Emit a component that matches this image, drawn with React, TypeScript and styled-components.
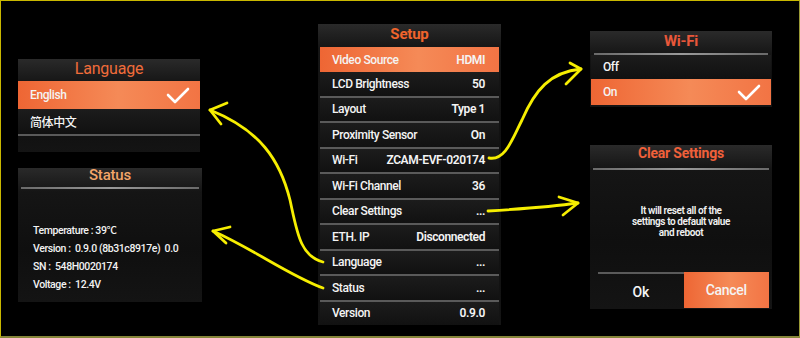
import React from 'react';
import styled, { createGlobalStyle } from 'styled-components';

const ORANGE = 'linear-gradient(90deg, #ee6634 0%, #f58a57 55%, #f27444 100%)';

const setupRows = [
  { label: 'Video Source', value: 'HDMI', active: true },
  { label: 'LCD Brightness', value: '50' },
  { label: 'Layout', value: 'Type 1' },
  { label: 'Proximity Sensor', value: 'On' },
  { label: 'Wi-Fi', value: 'ZCAM-EVF-020174' },
  { label: 'Wi-Fi Channel', value: '36' },
  { label: 'Clear Settings', value: '...' },
  { label: 'ETH. IP', value: 'Disconnected' },
  { label: 'Language', value: '...' },
  { label: 'Status', value: '...' },
  { label: 'Version', value: '0.9.0', last: true },
];

const statusLines = [
  'Temperature : 39℃',
  'Version :  0.9.0 (8b31c8917e)  0.0',
  'SN :  548H0020174',
  'Voltage :  12.4V',
];

const Check: React.FC = () => (
  <svg width="24" height="17" viewBox="0 0 24 17">
    <path d="M2 8 L9 15 L22 2" fill="none" stroke="#fff" strokeWidth="2.6" strokeLinecap="round" strokeLinejoin="round" />
  </svg>
);

const Arrows: React.FC = () => (
  <Overlay width="800" height="338" viewBox="0 0 800 338">
    <g fill="none" stroke="#f6ee00" strokeWidth="2.8" strokeLinecap="round" strokeLinejoin="round">
      <path d="M323 262 C 300 256, 297 232, 290 200 C 280 160, 260 130, 210 110" />
      <path d="M227 103 L210 110 L221 124" />
      <path d="M323 288 C 290 276, 255 250, 213 231" />
      <path d="M230 227 L213 231 L226 243" />
      <path d="M489 158 C 505 161, 512 140, 522 120 C 535 90, 550 72, 581 69" />
      <path d="M570 63 L581 69 L566 84" />
      <path d="M488 211 C 520 209, 550 207, 578 203" />
      <path d="M559 197 L578 203 L563 215" />
    </g>
  </Overlay>
);

const App: React.FC = () => {
  return (
    <>
      <GlobalStyle />
      <Canvas>
        <LeftColumn>
          <Panel $width={182}>
            <Title $color="#f06c3a" $weight={400} $size={16}>Language</Title>
            <Row $active $height={28}>
              <span>English</span>
              <Check />
            </Row>
            <Row $divider $height={25}>
              <span>简体中文</span>
            </Row>
            <Spacer $height={16} />
          </Panel>
          <Panel $width={184}>
            <Title $color="#f3a569" $weight={500} $size={15} $height={19} $line={14}>Status</Title>
            <Rule />
            <StatusBody>
              {statusLines.map(line => (
                <StatusLine key={line}>{line}</StatusLine>
              ))}
            </StatusBody>
          </Panel>
        </LeftColumn>

        <CenterColumn>
          <Panel $width={183} $pad={2}>
            <Title $color="#f0642c" $weight={700} $size={15} $height={23}>Setup</Title>
            {setupRows.map(item => (
              <Row
                key={item.label}
                $active={item.active}
                $divider={!item.active && !item.last}
                $height={item.active ? 25 : 23.5}
                $right={14}
              >
                <span>{item.label}</span>
                <Value>{item.value}</Value>
              </Row>
            ))}
          </Panel>
        </CenterColumn>

        <RightColumn>
          <Panel $width={182} $pad={1}>
            <Title $color="#e8573a" $weight={700} $size={15}>Wi-Fi</Title>
            <Rule />
            <Row $height={24}>
              <span>Off</span>
            </Row>
            <Row $active $height={26}>
              <span>On</span>
              <Check />
            </Row>
            <Spacer $height={2} />
          </Panel>
          <Panel $width={182}>
            <Title $color="#f0603a" $weight={700} $size={14} $height={23} $line={16}>Clear Settings</Title>
            <Rule />
            <Message>
              <p>It will reset all of the</p>
              <p>settings to default value</p>
              <p>and reboot</p>
            </Message>
            <Buttons>
              <Button>Ok</Button>
              <Button $primary>Cancel</Button>
            </Buttons>
          </Panel>
        </RightColumn>

        <Arrows />
      </Canvas>
    </>
  );
};

const GlobalStyle = createGlobalStyle`
  html, body {
    margin: 0;
    padding: 0;
    background: #000;
  }
  body {
    font-family: Roboto, "Noto Sans CJK SC", sans-serif;
  }
`;

const Canvas = styled.div`
  position: relative;
  box-sizing: border-box;
  width: 800px;
  height: 338px;
  display: flex;
  align-items: flex-start;
  background: #000;
  border-top: 1px solid #c9b800;
  border-left: 1px solid #c9b800;
  border-right: 1px solid #9a9a36;
  border-bottom: 2px solid #86863a;
  overflow: hidden;
`;

const LeftColumn = styled.div`
  display: flex;
  flex-direction: column;
  gap: 16px;
  margin: 58px 0 0 17px;
`;

const CenterColumn = styled.div`
  margin: 23px 0 0 116px;
`;

const RightColumn = styled.div`
  display: flex;
  flex-direction: column;
  gap: 38px;
  margin: 30px 0 0 89px;
`;

const Panel = styled.div<{ $width: number; $pad?: number }>`
  width: ${p => p.$width}px;
  box-sizing: border-box;
  padding: 0 ${p => p.$pad ?? 0}px;
  display: flex;
  flex-direction: column;
  background: linear-gradient(180deg, #2a2a2a 0px, #151515 24px, #0f0f0f 60%, #141414 100%);
  color: #f2f2f2;
`;

const Title = styled.div<{ $color: string; $weight: number; $size: number; $height?: number; $line?: number }>`
  height: ${p => p.$height ?? 22}px;
  line-height: ${p => p.$line ?? 20}px;
  text-align: center;
  color: ${p => p.$color};
  font-weight: ${p => p.$weight};
  font-size: ${p => p.$size}px;
  letter-spacing: -0.2px;
`;

const Rule = styled.div`
  height: 2px;
  margin: 0 3px;
  background: linear-gradient(90deg, #6a6a6a, #9a9a9a 50%, #6a6a6a);
`;

const Row = styled.div<{ $active?: boolean; $divider?: boolean; $height: number; $right?: number }>`
  height: ${p => p.$height}px;
  display: flex;
  align-items: center;
  justify-content: space-between;
  padding: 0 ${p => p.$right ?? 10}px 0 12px;
  font-size: 12px;
  font-weight: 500;
  letter-spacing: -0.4px;
  color: #f4f4f4;
  background: ${p => (p.$active ? ORANGE : 'linear-gradient(180deg, #1c1c1c, #111)')};
  border-bottom: ${p => (p.$divider ? '2px solid #5a5a5a' : 'none')};
`;

const Value = styled.span`
  font-weight: 600;
`;

const Spacer = styled.div<{ $height: number }>`
  height: ${p => p.$height}px;
`;

const StatusBody = styled.div`
  display: flex;
  flex-direction: column;
  padding: 33px 0 8px 15px;
`;

const StatusLine = styled.div`
  height: 18px;
  line-height: 18px;
  font-size: 10.5px;
  font-weight: 500;
  letter-spacing: -0.4px;
  white-space: pre;
`;

const Message = styled.div`
  height: 102px;
  display: flex;
  flex-direction: column;
  align-items: center;
  justify-content: center;
  font-size: 10px;
  font-weight: 600;
  letter-spacing: -0.4px;

  p {
    margin: 0;
    height: 11px;
    line-height: 11px;
  }
`;

const Buttons = styled.div`
  display: flex;
  height: 36px;
  padding: 0 3px 1px 8px;
`;

const Button = styled.div<{ $primary?: boolean }>`
  flex: 1;
  display: flex;
  align-items: center;
  justify-content: center;
  font-size: 14px;
  font-weight: 500;
  letter-spacing: -0.3px;
  color: #f4f4f4;
  background: ${p => (p.$primary ? ORANGE : 'transparent')};
  border-top: ${p => (p.$primary ? 'none' : '2px solid #5a5a5a')};
  padding-top: ${p => (p.$primary ? 0 : 2)}px;
`;

const Overlay = styled.svg`
  position: absolute;
  left: -1px;
  top: -1px;
  pointer-events: none;
`;

export default App;
